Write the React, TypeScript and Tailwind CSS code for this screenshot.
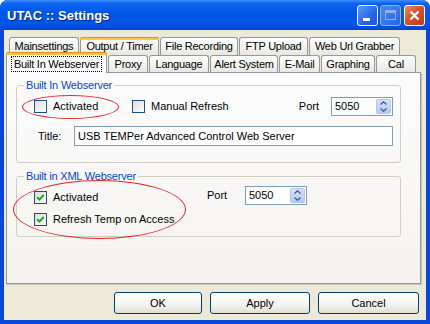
import React from "react";

const row1 = [
  { label: "Mainsettings", w: "w-[70px]" },
  { label: "Output / Timer", w: "w-[79px]", hot: true },
  { label: "File Recording", w: "w-[78px]" },
  { label: "FTP Upload", w: "w-[69px]" },
  { label: "Web Url Grabber", w: "w-[91px]" },
];

const row2 = [
  { label: "Proxy", w: "w-[40px]" },
  { label: "Language", w: "w-[60px]" },
  { label: "Alert System", w: "w-[68px]" },
  { label: "E-Mail", w: "w-[41px]" },
  { label: "Graphing", w: "w-[54px]" },
  { label: "Cal", w: "w-[40px]" },
];

const Tab = ({ label, w, hot }: { label: string; w: string; hot?: boolean }) => (
  <div
    className={`${w} h-full relative flex items-center justify-center tracking-[-0.25px] rounded-t-[3px] border border-b-0 border-[#919b9c] bg-[linear-gradient(180deg,#ffffff,#f0efea_70%,#e8e7e1)]`}
  >
    {hot && (
      <div className="absolute -top-px -left-px -right-px h-[3px] rounded-t-[3px] bg-[#ffc83c] border-t border-[#e68b2c]" />
    )}
    {label}
  </div>
);

const Check = ({ checked }: { checked?: boolean }) => (
  <span className="w-[13px] h-[13px] shrink-0 border border-[#1c5180] bg-[linear-gradient(135deg,#dcdcd7,#ffffff)] flex items-center justify-center">
    {checked && (
      <svg width="9" height="9" viewBox="0 0 9 9">
        <path d="M1.2 4.2 L3.5 6.6 L7.8 1.8" stroke="#21a121" strokeWidth="2" fill="none" />
      </svg>
    )}
  </span>
);

const Spin = () => (
  <div className="w-[62px] h-[19px] border border-[#7f9db9] bg-white flex items-center">
    <span className="flex-1 pl-[3px]">5050</span>
    <div className="w-[15px] h-[15px] mr-px rounded-[2px] border border-[#b4c6f1] bg-[linear-gradient(180deg,#d4e0fc,#b6c9f6)] flex flex-col items-center justify-center gap-[3px]">
      <svg width="7" height="4" viewBox="0 0 7 4">
        <path d="M0.5 3.5 L3.5 0.8 L6.5 3.5" stroke="#4d6185" strokeWidth="1.4" fill="none" />
      </svg>
      <svg width="7" height="4" viewBox="0 0 7 4">
        <path d="M0.5 0.5 L3.5 3.2 L6.5 0.5" stroke="#4d6185" strokeWidth="1.4" fill="none" />
      </svg>
    </div>
  </div>
);

const Button = ({ label, w }: { label: string; w: string }) => (
  <button
    className={`${w} h-[22px] rounded-[3px] border border-[#003c74] bg-[linear-gradient(180deg,#ffffff,#f3f3ef_60%,#e2ded4)] flex items-center justify-center`}
  >
    {label}
  </button>
);

export default function App() {
  return (
    <div className="w-[430px] h-[324px] bg-white font-[family-name:'Liberation_Sans',Arial,sans-serif] text-[11px] text-black">
      <div className="w-full h-full rounded-t-[8px] bg-[#0846dc] flex flex-col overflow-hidden">
        {/* title bar */}
        <div className="h-[30px] shrink-0 flex items-center pl-[7px] pr-[5px] bg-[linear-gradient(180deg,#3d8efc_0%,#0a62f0_12%,#0057e6_45%,#0055e3_85%,#0043c8_100%)]">
          <span className="flex-1 pt-px text-white font-bold text-[13px] [text-shadow:1px_1px_0_#0a1e8a]">
            UTAC :: Settings
          </span>
          <div className="flex gap-[2px]">
            <div className="w-[21px] h-[21px] rounded-[3px] border border-white bg-[linear-gradient(135deg,#5e9bfb,#2565ea_60%,#1a53d8)] flex items-end pl-[5px] pb-[4px]">
              <div className="w-[7px] h-[3px] bg-white" />
            </div>
            <div className="w-[21px] h-[21px] rounded-[3px] border border-[#8fb0f5] bg-[linear-gradient(135deg,#4a87f5,#2a66e6)] flex items-center justify-center">
              <div className="w-[11px] h-[10px] border border-[#8fb0f5] border-t-[3px]" />
            </div>
            <div className="w-[21px] h-[21px] ml-px rounded-[3px] border border-white bg-[linear-gradient(135deg,#ea8a6c,#d4532f_45%,#c2391a)] flex items-center justify-center">
              <svg width="11" height="11" viewBox="0 0 11 11">
                <path d="M1.5 1.5 L9.5 9.5 M9.5 1.5 L1.5 9.5" stroke="#ffffff" strokeWidth="2.2" />
              </svg>
            </div>
          </div>
        </div>

        {/* dialog body */}
        <div className="flex-1 mx-[4px] mb-[4px] bg-[#ece9d8] flex flex-col pt-[7px]">
          <div className="flex gap-[1px] pl-[5px] h-[18px]">
            {row1.map((t) => (
              <Tab key={t.label} {...t} />
            ))}
          </div>
          <div className="flex gap-[1px] pl-[2px] h-[17px] items-end relative z-10">
            <div className="w-[101px] h-[21px] -mb-px relative rounded-t-[3px] border border-b-0 border-[#919b9c] bg-[#fcfcfe] flex items-center justify-center pt-[2px]">
              <div className="absolute -top-px -left-px -right-px h-[3px] rounded-t-[3px] bg-[#ffc83c] border-t border-[#e68b2c]" />
              <span className="border border-dotted border-black px-[2px] leading-[14px] tracking-[-0.25px]">Built In Webserver</span>
            </div>
            {row2.map((t) => (
              <Tab key={t.label} {...t} />
            ))}
          </div>

          <div className="ml-[2px] w-[415px] h-[212px] relative z-0 border border-[#919b9c] shadow-[1px_1px_0_#c9c6b8] bg-[linear-gradient(180deg,#fcfcfe,#f4f3ee)] flex flex-col">
            <fieldset className="mt-[6px] ml-[9px] w-[385px] h-[84px] border border-[#d0d0bf] rounded-[3px]">
              <legend className="ml-[7px] px-[2px] leading-[13px] tracking-[-0.2px] text-[#0046d5]">Built In Webserver</legend>
              <div className="pt-[5px] pl-[17px] pr-[7px] flex flex-col gap-[10px]">
                <div className="h-[19px] flex items-center">
                  <div className="w-[98px] flex items-center gap-[6px]">
                    <Check />
                    <span>Activated</span>
                  </div>
                  <div className="flex items-center gap-[6px]">
                    <Check />
                    <span>Manual Refresh</span>
                  </div>
                  <span className="ml-auto mr-[12px]">Port</span>
                  <Spin />
                </div>
                <div className="h-[20px] flex items-center">
                  <span className="w-[40px] pl-[4px]">Title:</span>
                  <div className="flex-1 h-[20px] border border-[#7f9db9] bg-white flex items-center pl-[3px]">
                    USB TEMPer Advanced Control Web Server
                  </div>
                </div>
              </div>
            </fieldset>

            <fieldset className="mt-[7px] ml-[9px] w-[385px] h-[67px] border border-[#d0d0bf] rounded-[3px]">
              <legend className="ml-[7px] px-[2px] leading-[13px] tracking-[-0.2px] text-[#0046d5]">Built in XML Webserver</legend>
              <div className="pt-[3px] pl-[17px] flex">
                <div className="w-[173px] pt-[5px] flex flex-col gap-[9px]">
                  <div className="h-[13px] flex items-center gap-[6px]">
                    <Check checked />
                    <span>Activated</span>
                  </div>
                  <div className="h-[13px] flex items-center gap-[6px]">
                    <Check checked />
                    <span>Refresh Temp on Access</span>
                  </div>
                </div>
                <span className="w-[38px] h-[19px] flex items-center">Port</span>
                <Spin />
              </div>
            </fieldset>

            {/* red annotation ellipses */}
            <div className="absolute left-[15px] top-[22px] w-[97px] h-[24px] rounded-[50%] border-[1.5px] border-[#e8262c]" />
            <div className="absolute left-[6px] top-[107px] w-[173px] h-[59px] rounded-[50%] border-[1.5px] border-[#e8262c]" />
          </div>

          <div className="mt-[8px] flex justify-end gap-[8px] pr-[7px]">
            <Button label="OK" w="w-[88px]" />
            <Button label="Apply" w="w-[100px]" />
            <Button label="Cancel" w="w-[101px]" />
          </div>
        </div>
      </div>
    </div>
  );
}
